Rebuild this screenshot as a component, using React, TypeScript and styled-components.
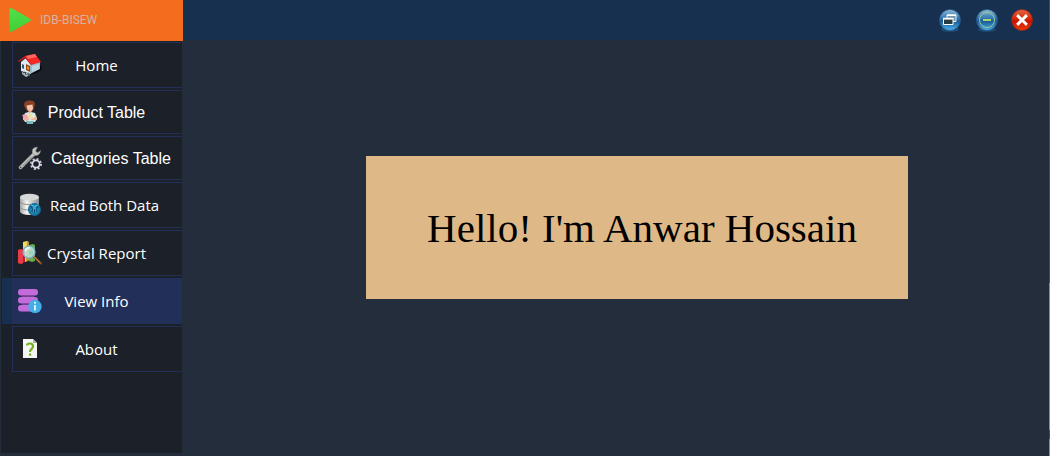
import React from "react";
import styled, { createGlobalStyle } from "styled-components";

const GlobalStyle = createGlobalStyle`
  * { box-sizing: border-box; }
  body { margin: 0; background: #242d3b; }
  button { font: inherit; color: inherit; cursor: pointer; }
`;

const uiFont = `"Open Sans", "Noto Sans", sans-serif`;
const arialFont = `"Liberation Sans", Arial, sans-serif`;

const Window = styled.div`
  min-height: 100vh;
  display: grid;
  grid-template-columns: 183px 1fr;
  grid-template-rows: auto 1fr;
  background: #242d3b;
  border-right: 1px solid;
  border-image: linear-gradient(#1a50a8 0 62%, #3fa0dc 62% 94%, #1a50a8 94% 96%, #3fa0dc 96%) 1;
  color: #fff;
`;

const Brand = styled.div`
  height: 41px;
  display: flex;
  align-items: center;
  gap: 8px;
  padding: 0 8px 2px;
  background: #f46c1d;
  color: #d3b5a2;
  font: 12px/16px Roboto, sans-serif;
`;

const TitleBar = styled.header`
  height: 40px;
  display: flex;
  align-items: center;
  justify-content: flex-end;
  padding: 0 15px;
  background: #18304f;
`;

const WindowButton = styled.button<{ $gap?: number }>`
  display: flex;
  width: 24px;
  height: 24px;
  margin-left: ${({ $gap }) => $gap ?? 0}px;
  padding: 0;
  border: 0;
  background: none;
`;

const Sidebar = styled.nav`
  display: flex;
  flex-direction: column;
  gap: 2px;
  margin: 0 1px 3px;
  padding-top: 1px;
  background: #1c2028;
`;

const Item = styled.div<{ $active?: boolean }>`
  margin-left: 1px;
  padding-left: 10px;
  background: ${({ $active }) => ($active ? "#18304f" : "transparent")};
`;

const NavButton = styled.button<{ $active?: boolean; $compact?: boolean }>`
  display: grid;
  align-items: center;
  width: 100%;
  height: ${({ $compact }) => ($compact ? 44 : 46)}px;
  padding: 0 0 0 5px;
  border: 1px solid #222f59;
  border-right: 0;
  background: ${({ $active }) => ($active ? "#222f59" : "#1c2028")};
  font-family: ${({ $compact }) => ($compact ? arialFont : uiFont)};
  font-size: ${({ $compact }) => ($compact ? 16 : 15)}px;
  line-height: ${({ $compact }) => ($compact ? 18 : 20)}px;
  text-align: center;
  white-space: nowrap;

  > * { grid-area: 1 / 1; }
`;

const Label = styled.span<{ $inset?: number; $compact?: boolean }>`
  padding-top: ${({ $compact }) => ($compact ? 2 : 0)}px;
  padding-left: ${({ $inset }) => $inset ?? 0}px;
  padding-right: 7px;
`;

const Main = styled.main`
  display: flex;
  justify-content: center;
  align-items: flex-start;
  padding: 115px 0 24px 42px;
`;

const Card = styled.section`
  width: 100%;
  max-width: 542px;
  display: flex;
  justify-content: center;
  padding: 48px 0 47px 10px;
  background: #deb887;
  color: #000;
`;

const Greeting = styled.h1`
  margin: 0;
  font: 400 41px/48px "Liberation Serif", "Times New Roman", serif;
  white-space: nowrap;
`;

const Svg = styled.svg`
  display: block;
  width: 24px;
  height: 24px;
`;

const PlayIcon = () => (
  <Svg viewBox="0 0 24 24" aria-hidden>
    <defs>
      <linearGradient id="play" x1="0" y1="0" x2="0" y2="1">
        <stop offset="0" stopColor="#4fe04a" /><stop offset="1" stopColor="#43cf35" />
      </linearGradient>
    </defs>
    <path d="M1.5 2Q1.5-.8 4.2.5L21.6 10.4Q24 12 21.6 13.6L4.2 23.5Q1.5 24.8 1.5 22Z" fill="url(#play)" />
  </Svg>
);

const HomeIcon = () => (
  <Svg viewBox="0 0 24 24" aria-hidden>
    <path d="M4 20l6 2 9-2 5-4-1-4z" fill="#080a0e" />
    <path d="M3 9l5-4 5 7v9L3 18z" fill="#dce9f3" />
    <path d="M12 11l10-2v7l-10 5z" fill="#9ab8ce" />
    <path d="M14 13l7-2v5l-7 3z" fill="#bed4e2" />
    <path d="M8 11l4 2v6l-4-2z" fill="#9c4510" />
    <path d="M9 13l2 1v3l-2-1z" fill="#e49635" />
    <path d="M4 11l2 1v4l-2-1z" fill="#2d5471" />
    <path d="M7 3l10-2 6 8-10 3z" fill="#f42824" />
    <path d="M8 3l9-2 2 3-9 2z" fill="#ff6660" />
    <path d="M0 8l7-5 6 8v1L7 5 1 9z" fill="#cb1b22" />
    <path d="M4 19l4 1 3-1 1 3-4 2-4-3z" fill="#aeb9bf" />
    <path d="M5 20l2-1 1 3M9 21h2v2" fill="none" stroke="#35404a" />
  </Svg>
);

const PersonIcon = () => (
  <Svg viewBox="0 0 24 24" aria-hidden>
    <path d="M6.5 7C5 2 8 0 12 .5 17 0 18 4 16 8L15 11H9z" fill="#874026" />
    <path d="M8.5 5.5l6-1 .5 4q-1 3-3 3t-3-3z" fill="#f4c6a7" />
    <path d="M10.5 10h3v4h-3z" fill="#e6ac8c" />
    <path d="M7 13l4-1 1 2 1-2 4 1 2 6-2 3H7l-2-3z" fill="#d5edeb" />
    <path d="M5 17q-1 4 4 4l3-2-4-1 1-3zM18 15l1 4q-1 2-5 1l-2-1 4-1z" fill="#efb796" />
    <path d="M10 14h4l1 4h-5z" fill="#eee1a1" />
    <path d="M4 15l4-1 3 4-4 2z" fill="#eea9b9" />
    <path d="M8 21h8l-1 3H9z" fill="#77b9bd" />
  </Svg>
);

const ToolsIcon = () => (
  <Svg viewBox="0 0 24 24" aria-hidden>
    <path d="M2.5 21.5L15.5 8.5" stroke="#5c5f62" strokeWidth="4" strokeLinecap="round" />
    <path d="M2.5 21.5L16 8" stroke="#c9c9c7" strokeWidth="2.8" strokeLinecap="round" />
    <path d="M4.5 20L14 10.5" stroke="#77797a" />
    <path d="M19.5 1.2Q14.5 1 14.2 5.2 14 9 17.5 9.5 22 9.5 22.5 4.5L19.5 6.8 17.5 5z" fill="#c5c5c3" stroke="#85878a" strokeWidth=".5" />
    <circle cx="2.8" cy="21.2" r=".8" fill="#25282c" />
    <circle cx="18" cy="18" r="5" fill="none" stroke="#c6c9d4" strokeWidth="2" strokeDasharray="1.96 1.96" />
    <circle cx="18" cy="18" r="3.6" fill="#1c2028" stroke="#dadce5" strokeWidth="1.7" />
  </Svg>
);

const DatabaseIcon = () => (
  <Svg viewBox="0 0 24 24" aria-hidden>
    <defs>
      <linearGradient id="disk"><stop stopColor="#a1a5a6" /><stop offset=".35" stopColor="#f5f5f3" /><stop offset="1" stopColor="#8b8f92" /></linearGradient>
      <radialGradient id="sphere"><stop stopColor="#4cb9df" /><stop offset="1" stopColor="#086490" /></radialGradient>
    </defs>
    <path d="M2 4v15q2 3 9.5 3t9.5-3V4z" fill="url(#disk)" />
    <ellipse cx="11.5" cy="4.2" rx="9.5" ry="3.4" fill="#d6d8d8" />
    <path d="M2 9q2 2.6 9.5 2.6T21 9M2 14.5q2 2.6 9.5 2.6" fill="none" stroke="#868c8f" strokeWidth=".9" />
    <circle cx="16.5" cy="16.5" r="6.5" fill="url(#sphere)" />
    <path d="M13 13q2 2 1 6M20 13q-2 2-1 6M16.5 16v4" fill="none" stroke="#07517b" strokeWidth="1.2" />
    <path d="M13 12l3.5 1.5L20 12" stroke="#5bc8e4" fill="none" />
  </Svg>
);

const ReportIcon = () => (
  <Svg viewBox="0 0 24 24" aria-hidden>
    <path d="M5 1l4-1 2 1v18l-4 2-2-1z" fill="#f0dc63" />
    <path d="M9 1l2 0v18l-3 2z" fill="#bc9a2e" />
    <path d="M11 4l4-1 2 1v16l-3 1-3-1z" fill="#65ae4e" />
    <path d="M0 9l3-1 4 1v12l-4 2-3-1z" fill="#b91d2a" />
    <path d="M0 9l3-1 2 1v13l-2 1-3-1z" fill="#e93b48" />
    <path d="M15 15l8 7.5" stroke="#874c1c" strokeWidth="2" strokeLinecap="round" />
    <path d="M16 15.5l6 6" stroke="#e4a15b" strokeWidth=".9" />
    <circle cx="11" cy="11" r="6" fill="#bfdfdc" fillOpacity=".86" stroke="#7aaed3" strokeWidth="1.2" />
    <path d="M7.5 10q1-3.5 4.5-3" stroke="#edfaf0" strokeWidth="1.8" fill="none" />
    <path d="M11 10h4v4h-4z" fill="#94cda2" opacity=".6" />
  </Svg>
);

const InfoIcon = () => (
  <Svg viewBox="0 0 24 24" aria-hidden>
    {[0, 8, 16].map((y) => <rect key={y} x="0" y={y} width="20" height="6.5" rx="3" fill="#c36bdb" />)}
    <path d="M4 7h12M4 15h12" stroke="#8c48a5" strokeWidth="1.5" />
    <circle cx="17" cy="17.5" r="6.7" fill="#42aee5" />
    <path d="M17 16v5.5" stroke="#fff" strokeWidth="1.6" />
    <circle cx="17" cy="13.8" r="1" fill="#fff" />
  </Svg>
);

const HelpIcon = () => (
  <Svg viewBox="0 0 24 24" aria-hidden>
    <path d="M5 2h10l4 4v15H5z" fill="#f5f5f1" />
    <path d="M15 2v4h4z" fill="#aaaea8" />
    <path d="M9 8.5Q9 6.5 12 6.5t3 2.8q0 1.7-1.5 2.7T12 15" fill="none" stroke="#71b51e" strokeWidth="2.2" />
    <path d="M11 16.5h2.2v2.2H11z" fill="#71b51e" />
  </Svg>
);

const Orb = ({ id, red, children }: { id: string; red?: boolean; children: React.ReactNode }) => (
  <Svg viewBox="0 0 24 24" aria-hidden>
    <defs>
      <linearGradient id={id} x1="0" y1="0" x2="0" y2="1">
        <stop stopColor={red ? "#e76743" : "#8fbbd8"} />
        <stop offset=".45" stopColor={red ? "#d42800" : "#2c72ad"} />
        <stop offset=".55" stopColor={red ? "#c81200" : "#175a97"} />
        <stop offset="1" stopColor={red ? "#ef3d08" : "#4db2ec"} />
      </linearGradient>
    </defs>
    {!red && <ellipse cx="12" cy="21.5" rx="9" ry="2.3" fill="#235b8a" opacity=".6" />}
    <circle cx="12" cy="12" r="10.5" fill={`url(#${id})`} stroke={red ? "#8c2425" : "#275985"} strokeWidth=".8" />
    {children}
  </Svg>
);

const items = [
  { label: "Home", icon: <HomeIcon /> },
  { label: "Product Table", icon: <PersonIcon />, compact: true },
  { label: "Categories Table", icon: <ToolsIcon />, compact: true, inset: 29 },
  { label: "Read Both Data", icon: <DatabaseIcon />, inset: 16 },
  { label: "Crystal Report", icon: <ReportIcon /> },
  { label: "View Info", icon: <InfoIcon />, active: true },
  { label: "About", icon: <HelpIcon /> },
];

export default function App() {
  return (
    <>
      <GlobalStyle />
      <Window>
        <Brand><PlayIcon />IDB-BISEW</Brand>
        <TitleBar>
          <WindowButton aria-label="Restore">
            <Orb id="restore">
              <path d="M9 7h9v6.5H9z" fill="#7596a9" stroke="#e8eef2" />
              <path d="M9 7.2h9" stroke="#fff" strokeWidth="1.6" />
              <path d="M5.5 10.5h9.5v6H5.5z" fill="#263b43" stroke="#fff" />
              <path d="M5 10.7h10.5" stroke="#fff" strokeWidth="1.8" />
            </Orb>
          </WindowButton>
          <WindowButton aria-label="Minimize" $gap={13}>
            <Orb id="minimize">
              <circle cx="12" cy="12" r="7.5" fill="none" stroke="#9fc98c" />
              <path d="M8 12h8" stroke="#a5d76b" strokeWidth="2" />
            </Orb>
          </WindowButton>
          <WindowButton aria-label="Close" $gap={11}>
            <Orb id="close" red>
              <path d="M8.2 8.2l7.6 7.6M15.8 8.2l-7.6 7.6" stroke="#fff" strokeWidth="3" strokeLinecap="square" />
            </Orb>
          </WindowButton>
        </TitleBar>
        <Sidebar aria-label="Main">
          {items.map(({ label, icon, compact, inset, active }) => (
            <Item key={label} $active={active}>
              <NavButton $active={active} $compact={compact} aria-current={active ? "page" : undefined}>
                {icon}
                <Label $inset={inset} $compact={compact}>{label}</Label>
              </NavButton>
            </Item>
          ))}
        </Sidebar>
        <Main>
          <Card><Greeting>Hello! I'm Anwar Hossain</Greeting></Card>
        </Main>
      </Window>
    </>
  );
}
